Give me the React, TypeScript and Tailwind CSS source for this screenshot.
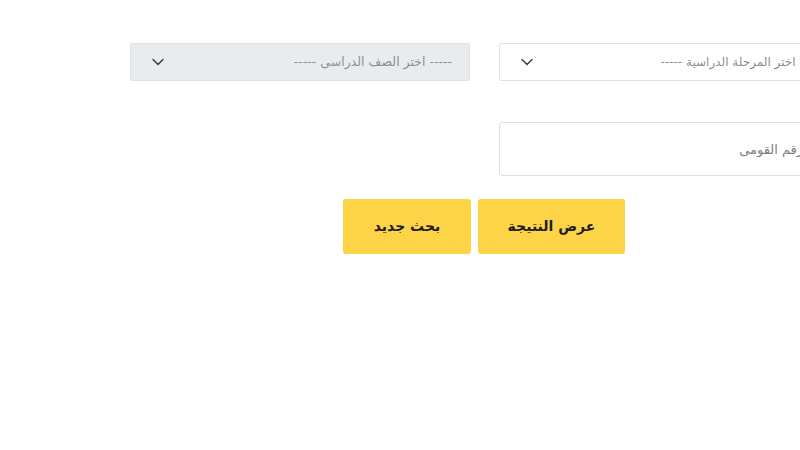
import { useState } from 'react';

const Chevron = () => (
  <svg width="12" height="8" viewBox="0 0 12 8" fill="none" className="shrink-0">
    <path d="M1 1.5l5 5 5-5" stroke="#343a40" strokeWidth="1.4" strokeLinecap="round" strokeLinejoin="round" />
  </svg>
);

const App = () => {
  const [rakam, setRakam] = useState('');

  return (
    <div className="w-[800px] h-[450px] overflow-hidden bg-white" style={{ fontFamily: '"DejaVu Sans", "Noto Sans", sans-serif' }}>
      <div className="ml-[130px] w-[731px] pt-[43px]">
        {/* Selects */}
        <div dir="rtl" className="grid grid-cols-[340px_340px] justify-end gap-[29px]">
          <div className="h-[38px] flex items-center justify-between px-[17px] pl-[21px] bg-white border border-[#dfe2e6] rounded-[2px]">
            <span className="text-[12px] text-[#8a8f96] whitespace-nowrap">----- اختر المرحلة الدراسية -----</span>
            <Chevron />
          </div>
          <div className="h-[38px] flex items-center justify-between px-[17px] pl-[21px] bg-[#e9ecef] border border-[#dfe2e6] rounded-[2px]">
            <span className="text-[12.5px] text-[#8a8f96] whitespace-nowrap">----- اختر الصف الدراسى -----</span>
            <Chevron />
          </div>
        </div>

        {/* National ID */}
        <div dir="rtl" className="grid grid-cols-[362px_340px] gap-[29px] mt-[41px]">
          <input
            value={rakam}
            onChange={(e) => setRakam(e.target.value)}
            placeholder="ادخل الرقم القومى"
            className="h-[54px] px-[17px] text-[13px] text-[#495057] placeholder:text-[#7b8087] border border-[#dcdfe3] rounded-[3px] outline-none"
          />
        </div>

        {/* Buttons */}
        <div dir="rtl" className="w-[708px] flex justify-center gap-[7px] mt-[23px]">
          <button className="w-[147px] h-[55px] bg-[#fdd447] rounded-[3px] text-[14px] font-bold text-[#1d1d1d]">
            عرض النتيجة
          </button>
          <button className="w-[128px] h-[55px] bg-[#fdd447] rounded-[3px] text-[14px] font-bold text-[#1d1d1d]">
            بحث جديد
          </button>
        </div>
      </div>
    </div>
  );
};

export default App;
